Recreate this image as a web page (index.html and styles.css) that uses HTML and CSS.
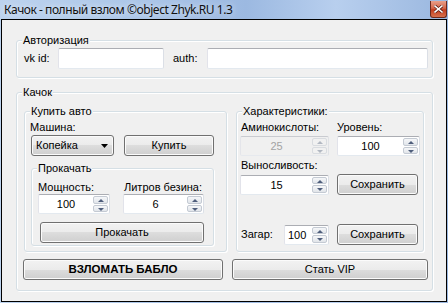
FILE: index.html
```html
<!DOCTYPE html>
<html lang="ru">
<head>
  <meta charset="UTF-8" />
  <title>Качок - полный взлом</title>
  <link rel="stylesheet" href="styles.css">
</head>
<body>
  <div class="window">
    <div class="titlebar">
      <span class="title">Качок - полный взлом ©object Zhyk.RU 1.3</span>
      <div class="close">
        <svg width="9" height="8" viewBox="0 0 9 8">
          <path d="M1 1 L8 7 M8 1 L1 7" stroke="#5a1a10" stroke-width="3" stroke-linecap="square"/>
          <path d="M1 1 L8 7 M8 1 L1 7" stroke="#ffffff" stroke-width="1.6" stroke-linecap="square"/>
        </svg>
      </div>
    </div>

    <div class="client">
      <div class="group auth">
        <span class="legend">Авторизация</span>
        <div class="auth-row">
          <span class="lbl vk-lbl">vk id:</span>
          <div class="text vk-input"></div>
          <span class="lbl token-lbl">auth:</span>
          <div class="text token-input"></div>
        </div>
      </div>

      <div class="group main">
        <span class="legend">Качок</span>

        <div class="cols">
          <div class="group buy">
            <span class="legend">Купить авто</span>
            <div class="lbl car-lbl">Машина:</div>
            <div class="buy-row">
              <div class="combo">
                <span>Копейка</span>
                <svg width="7" height="4" viewBox="0 0 7 4"><path d="M0 0 H7 L3.5 4 Z" fill="#000"/></svg>
              </div>
              <div class="btn buy-btn">Купить</div>
            </div>

            <div class="group tune">
              <span class="legend">Прокачать</span>
              <div class="tune-labels">
                <span class="lbl power-lbl">Мощность:</span>
                <span class="lbl">Литров безина:</span>
              </div>
              <div class="tune-row">
                <div class="spin power"><span class="val">100</span><div class="arrows"><div class="arr up"></div><div class="arr down"></div></div></div>
                <div class="spin fuel"><span class="val">6</span><div class="arrows"><div class="arr up"></div><div class="arr down"></div></div></div>
              </div>
              <div class="btn tune-btn">Прокачать</div>
            </div>
          </div>

          <div class="group stats">
            <span class="legend">Характеристики:</span>
            <div class="stat-labels">
              <span class="lbl amino-lbl">Аминокислоты:</span>
              <span class="lbl">Уровень:</span>
            </div>
            <div class="stat-row">
              <div class="spin wide off"><span class="val">25</span><div class="arrows"><div class="arr up"></div><div class="arr down"></div></div></div>
              <div class="spin level"><span class="val">100</span><div class="arrows"><div class="arr up"></div><div class="arr down"></div></div></div>
            </div>
            <div class="lbl stamina-lbl">Выносливость:</div>
            <div class="stat-row">
              <div class="spin wide"><span class="val">15</span><div class="arrows"><div class="arr up"></div><div class="arr down"></div></div></div>
              <div class="btn save-btn">Сохранить</div>
            </div>
            <div class="stat-row tan-row">
              <span class="lbl tan-lbl">Загар:</span>
              <div class="spin tan"><span class="val">100</span><div class="arrows"><div class="arr up"></div><div class="arr down"></div></div></div>
              <div class="btn save-btn">Сохранить</div>
            </div>
          </div>
        </div>

        <div class="actions">
          <div class="btn hack-btn">ВЗЛОМАТЬ БАБЛО</div>
          <div class="btn vip-btn">Стать VIP</div>
        </div>
      </div>
    </div>
  </div>
</body>
</html>
```

FILE: styles.css
```css
* { box-sizing: border-box; }

body {
  margin: 0;
  font-family: "Liberation Sans", Arial, sans-serif;
  font-size: 11px;
  color: #000;
}

.window {
  width: 448px;
  height: 303px;
  display: flex;
  flex-direction: column;
  background: linear-gradient(to right, #bdd3ee, #a9c4e7 35%, #9cb9e1 55%, #b8cfee 75%, #9ab7df);
}

.titlebar {
  height: 19px;
  display: flex;
  align-items: center;
  justify-content: space-between;
  padding-left: 4px;
  padding-right: 1px;
}

.title {
  font-family: "Noto Sans", sans-serif;
  font-size: 12px;
  letter-spacing: -0.45px;
  line-height: 16px;
  color: #111;
  text-shadow: 0 0 6px rgba(255, 255, 255, 0.8);
}

.close {
  width: 17px;
  height: 17px;
  margin-top: -1px;
  display: flex;
  align-items: center;
  justify-content: center;
  border: 1px solid #6b2a1e;
  border-top: none;
  border-radius: 0 0 3px 3px;
  background: linear-gradient(#e9a08b, #d4664a 45%, #c13d1f 55%, #d8704d);
}

.client {
  flex: 1;
  margin: 0 1px 1px;
  border: 1px solid #000;
  background: #f0f0f0;
}

/* group boxes */
.group {
  border: 1px solid #d5dfe5;
  border-radius: 3px;
  box-shadow: inset 1px 1px 0 #fff, 1px 1px 0 #fff;
}

.legend {
  display: block;
  width: fit-content;
  margin: -7px 0 0 5px;
  padding: 0 1px;
  line-height: 13px;
  background: #f0f0f0;
}

.lbl {
  line-height: 13px;
  white-space: nowrap;
}

/* text boxes */
.text {
  height: 21px;
  background: #fff;
  border: 1px solid;
  border-color: #abadb3 #dbdfe6 #e3e9ef #e2e3ea;
  border-radius: 2px;
}

/* buttons */
.btn, .combo {
  height: 21px;
  display: flex;
  align-items: center;
  justify-content: center;
  border: 1px solid #707070;
  border-radius: 3px;
  background: linear-gradient(#f2f2f2, #ebebeb 50%, #dddddd 50%, #cfcfcf);
  box-shadow: inset 0 0 0 1px #fbfbfb;
  line-height: 13px;
}

/* numeric up-down */
.spin {
  height: 20px;
  display: flex;
  background: #fff;
  border: 1px solid;
  border-color: #abadb3 #dbdfe6 #e3e9ef #e2e3ea;
  border-radius: 2px;
}

.spin .val {
  flex: 1;
  text-align: center;
  line-height: 18px;
}

.spin .arrows {
  width: 15px;
  margin: 1px 1px 1px 0;
  display: flex;
  flex-direction: column;
  gap: 1px;
}

.arr {
  flex: 1;
  border: 1px solid #c4cad3;
  border-radius: 2px;
  background: linear-gradient(#f6f7f9, #e1e5ea);
  position: relative;
}

.arr::after {
  content: "";
  position: absolute;
  left: 4px;
  top: 2px;
  border-left: 3px solid transparent;
  border-right: 3px solid transparent;
}

.arr.up::after { border-bottom: 3px solid #4f5e7c; }
.arr.down::after { border-top: 3px solid #4f5e7c; }

.spin.off {
  background: #f0f0f0;
  border-color: #c9cbd0 #e0e2e6 #e6e9ee #e4e5ea;
}

.spin.off .val { color: #a3a3a3; }
.spin.off .arr { border-color: #d9dce0; background: #f1f1f1; }
.spin.off .arr.up::after { border-bottom-color: #b2b8c2; }
.spin.off .arr.down::after { border-top-color: #b2b8c2; }

/* authorisation */
.auth {
  width: 417px;
  height: 38px;
  margin: 20px 0 0 14px;
}

.auth-row {
  display: flex;
  align-items: center;
  margin-top: 1px;
  padding-left: 7px;
}

.vk-lbl { width: 34px; }
.vk-input { width: 106px; }
.token-lbl { width: 34px; margin-left: 9px; }
.token-input { width: 221px; }

/* main group */
.main {
  width: 417px;
  height: 199px;
  margin: 14px 0 0 14px;
}

.cols {
  display: flex;
  gap: 9px;
  margin: 12px 0 0 7px;
}

.buy {
  width: 203px;
  height: 141px;
}

.car-lbl {
  margin-top: 3px;
  padding-left: 5px;
}

.buy-row {
  display: flex;
  margin: 1px 0 0 6px;
  gap: 10px;
}

.combo {
  width: 83px;
  justify-content: space-between;
  padding: 0 5px 0 4px;
}

.buy-btn { width: 90px; }

.tune {
  width: 183px;
  height: 78px;
  margin: 12px 0 0 6px;
}

.tune-labels {
  display: flex;
  margin-top: 6px;
  padding-left: 6px;
}

.power-lbl { width: 86px; }

.tune-row {
  display: flex;
  gap: 13px;
  margin-left: 6px;
}

.power { width: 72px; }
.fuel { width: 81px; }

.tune-btn {
  width: 164px;
  margin: 8px 0 0 8px;
}

.stats {
  width: 188px;
  height: 141px;
}

.stat-labels {
  display: flex;
  margin-top: 3px;
  padding-left: 4px;
}

.amino-lbl { width: 96px; }

.stat-row {
  display: flex;
  align-items: center;
  gap: 8px;
  margin: 2px 0 0 3px;
}

.stat-row .btn { width: 81px; }

.wide { width: 89px; }
.level { width: 83px; }

.stamina-lbl {
  margin-top: 3px;
  padding-left: 4px;
}

.tan-row { margin-top: 29px; }

.tan-lbl {
  width: 36px;
  padding-left: 1px;
}

.tan { width: 45px; }

.tan .val {
  text-align: left;
  padding-left: 3px;
}

/* bottom buttons */
.actions {
  display: flex;
  gap: 9px;
  margin: 7px 0 0 6px;
}

.hack-btn {
  width: 200px;
  font-weight: bold;
  font-size: 11.5px;
}

.vip-btn { width: 196px; }
```
